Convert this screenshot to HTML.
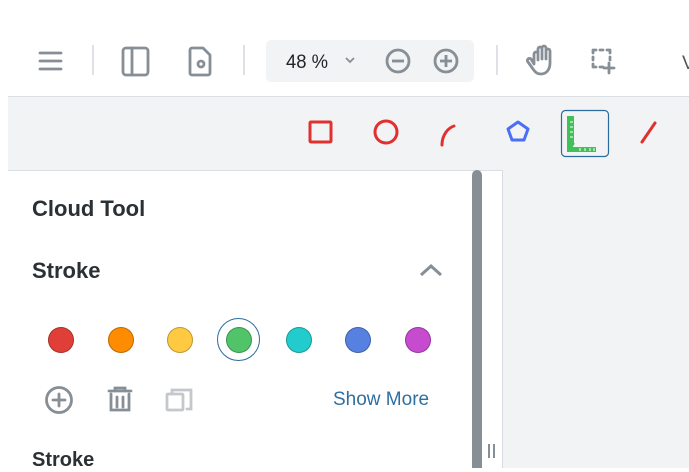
<!DOCTYPE html>
<html><head><style>
body{margin:0;width:689px;height:468px;overflow:hidden;background:#fff;font-family:"Liberation Sans",sans-serif;position:relative}
.a{position:absolute}
.t{color:#2b3035;font-weight:bold;font-size:22px}
.dot{position:absolute;width:26px;height:26px;border-radius:50%;top:327px;box-shadow:inset 0 0 0 1px rgba(0,0,0,.25)}
</style></head><body>
<svg class="a" style="left:0;top:0" width="689" height="96">
<g stroke="#868e96" stroke-width="2.8" fill="none" stroke-linecap="round" stroke-linejoin="round">
<path d="M40 53h21M40 61h21M40 69h21"/>
<rect x="123" y="48" width="25" height="27" rx="3"/><path d="M132 48v27"/>
<path d="M192 48h11l7 7v18a2 2 0 0 1-2 2h-16a2 2 0 0 1-2-2v-23a2 2 0 0 1 2-2z"/>
<circle cx="201" cy="64" r="3"/>
<path d="M534 64v-10a2 2 0 0 1 4 0v6v-11a2 2 0 0 1 4 0v10v-11a2 2 0 0 1 4 0v11v-8a2 2 0 0 1 4 0v12c0 7-4 11-9 11-4 0-6-2-8-5l-5-7a2 2 0 0 1 3-3z"/>
<path d="M593 50h3M600 50h3M607 50h3M593 50v3M593 57v3M593 64v3M610 50v3M610 57v3M593 67h3M600 67h3M609 63v10M604 68h10"/>
</g>
<g stroke="#dee2e6" stroke-width="2"><path d="M93 45v30M244 45v30M497 45v30"/></g>
<rect x="266" y="40" width="208" height="42" rx="5" fill="#f1f3f5"/>
<circle cx="398" cy="61" r="11" stroke="#868e96" stroke-width="2.8" fill="none"/><path d="M392 61h12" stroke="#868e96" stroke-width="2.8"/>
<circle cx="446" cy="61" r="11" stroke="#868e96" stroke-width="2.8" fill="none"/><path d="M440 61h12M446 55v12" stroke="#868e96" stroke-width="2.8"/>
<path d="M346 58l4 4 4-4" stroke="#868e96" stroke-width="1.8" fill="none"/>
<text x="286" y="68" font-size="19" fill="#212529" textLength="42" lengthAdjust="spacingAndGlyphs">48 %</text>
<text x="682" y="69" font-size="19" fill="#555">V</text>
</svg>
<div class="a" style="left:8px;top:96px;width:681px;height:73px;background:#f1f3f5;border-top:1px solid #dbdfe3;border-bottom:1px solid #dbdfe3"></div>
<svg class="a" style="left:0;top:96px" width="689" height="74">
<g fill="none" stroke-width="3" stroke-linecap="round" stroke-linejoin="round">
<rect x="310" y="26" width="21" height="20" rx="1" stroke="#e03131"/>
<ellipse cx="386" cy="36" rx="11" ry="11" stroke="#e03131"/>
<path d="M442 49c0-10 6-17 12-19" stroke="#e03131"/>
<path d="M518 26l10 7-4 11h-12l-4-11z" stroke="#4c6ef5"/>
<path d="M642 46l13-19" stroke="#e03131"/>
</g>
<rect x="561.5" y="14.5" width="47" height="46" rx="4" fill="none" stroke="#2b6b9e" stroke-width="1.2"/>
<path d="M567 20h7v27l-2 4h24v5h-29z" fill="#40c057"/>
<path d="M574 47l-5 8" stroke="#40c057" stroke-width="2"/>
<g stroke="#fff" stroke-width="1"><path d="M570 26h3M570 31h3M570 36h3M570 41h3M580 52v3M585 52v3M590 52v3M594 52v3"/></g>
</svg>
<div class="a t" style="left:32px;top:196px">Cloud Tool</div>
<div class="a t" style="left:32px;top:258px">Stroke</div>
<svg class="a" style="left:418px;top:262px" width="28" height="18"><path d="M3 13l10-9 10 9" stroke="#868e96" stroke-width="3" fill="none"/></svg>
<div class="dot" style="left:48px;background:#e03f38"></div>
<div class="dot" style="left:108px;background:#fd8c00"></div>
<div class="dot" style="left:167px;background:#ffc942"></div>
<div class="a" style="left:217px;top:318px;width:43px;height:43px;border-radius:50%;border:1px solid #2b6b9e;box-sizing:border-box"></div>
<div class="dot" style="left:226px;background:#51c46a"></div>
<div class="dot" style="left:286px;background:#22cccc"></div>
<div class="dot" style="left:345px;background:#5781e0"></div>
<div class="dot" style="left:405px;background:#c64bcf"></div>
<svg class="a" style="left:40px;top:382px" width="160" height="36" fill="none" stroke-width="2.8" stroke-linecap="round">
<circle cx="19" cy="18" r="12.5" stroke="#868e96"/><path d="M13 18h12M19 12v12" stroke="#868e96"/>
<path d="M69 9h22M75 9v-3h10v3M71 12v16h18v-16M77 15v10M83 15v10" stroke="#868e96"/>
<rect x="127" y="12" width="16" height="16" rx="1" stroke="#c4c8cc"/><path d="M132 12v-4h19v19h-4" stroke="#c4c8cc"/>
</svg>
<div class="a" style="left:333px;top:389px;font-size:19px;color:#2f6f9f">Show More</div>
<div class="a t" style="left:32px;top:449px;font-size:20px">Stroke</div>
<div class="a" style="left:472px;top:170px;width:10px;height:298px;background:#868e96;border-radius:5px 5px 0 0"></div>
<div class="a" style="left:488px;top:444px;width:2px;height:14px;background:#868e96"></div>
<div class="a" style="left:493px;top:444px;width:2px;height:14px;background:#868e96"></div>
<div class="a" style="left:502px;top:170px;width:1px;height:298px;background:#d8dce0"></div>
<div class="a" style="left:503px;top:170px;width:186px;height:298px;background:#f1f3f5"></div>
</body></html>
